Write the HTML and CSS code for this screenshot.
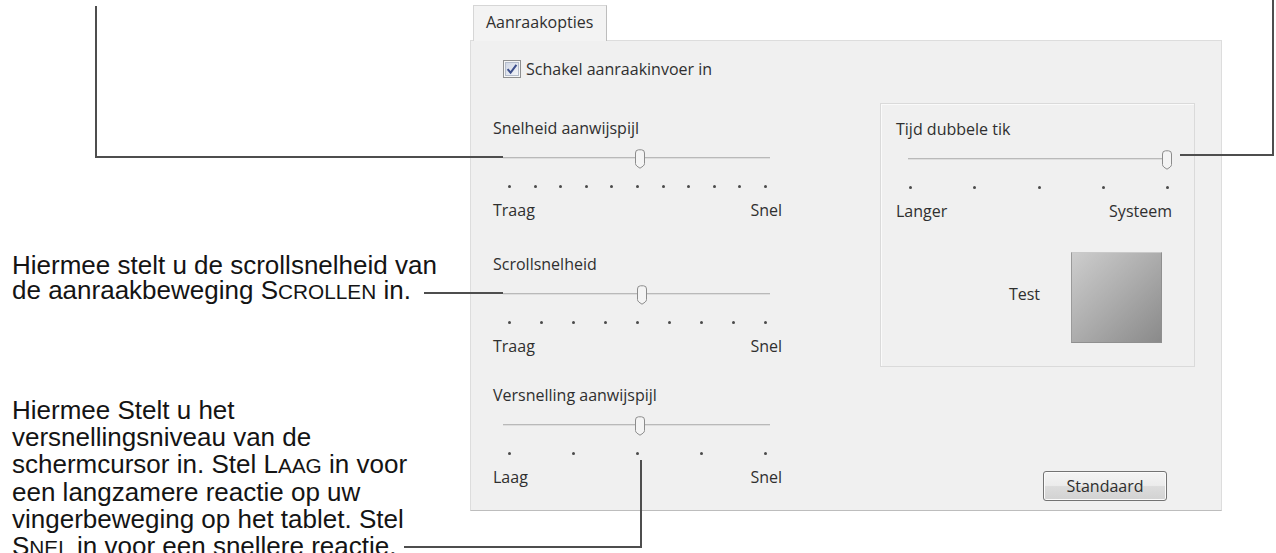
FILE: index.html
```html
<!DOCTYPE html>
<html lang="nl">
<head>
<meta charset="utf-8">
<title>Aanraakopties</title>
<link rel="stylesheet" href="styles.css">
</head>
<body>
<div class="page">
  <div class="notes">
    <p class="note note-scroll">Hiermee stelt u de scrollsnelheid van<br>de aanraakbeweging S<span class="sc">crollen</span> in.</p>
    <p class="note note-accel">Hiermee Stelt u het<br>versnellingsniveau van de<br>schermcursor in. Stel L<span class="sc">aag</span> in voor<br>een langzamere reactie op uw<br>vingerbeweging op het tablet. Stel<br>S<span class="sc">nel</span> in voor een snellere reactie.</p>
  </div>

  <div class="dialog">
    <div class="tabs"><div class="tab">Aanraakopties</div></div>
    <div class="panel">
      <div class="check-row">
        <span class="checkbox">
          <svg width="18" height="18" viewBox="0 0 18 18">
            <defs>
              <linearGradient id="cbg" x1="0" y1="0" x2="1" y2="1">
                <stop offset="0" stop-color="#cfd6e4"/>
                <stop offset="1" stop-color="#f4f6fa"/>
              </linearGradient>
            </defs>
            <rect x="0.5" y="0.5" width="17" height="17" fill="#f6f6f6" stroke="#8e8f90"/>
            <rect x="2.5" y="2.5" width="13" height="13" fill="url(#cbg)" stroke="#b4bccb"/>
            <path d="M4.6 9.2 L7.6 12.6 L13.4 4.8" fill="none" stroke="#3d4f8c" stroke-width="2"/>
          </svg>
        </span>
        <span class="check-text">Schakel aanraakinvoer in</span>
      </div>

      <div class="cols">
        <div class="col-left">
          <div class="slider s-left">
            <div class="s-label">Snelheid aanwijspijl</div>
            <div class="s-track"><div class="s-rail"><span class="thumb" style="left:51%"><svg width="12" height="20" viewBox="0 0 12 20"><path d="M1.5 4 Q1.5 0.8 4.5 0.8 H7.5 Q10.5 0.8 10.5 4 V14.5 Q10.5 16 9 17.2 L6 19.2 L3 17.2 Q1.5 16 1.5 14.5 Z" fill="#f4f4f4" stroke="#8c8c8c"/></svg></span></div></div>
            <div class="s-ticks"><i></i><i></i><i></i><i></i><i></i><i></i><i></i><i></i><i></i><i></i><i></i></div>
            <div class="s-ends"><span>Traag</span><span>Snel</span></div>
          </div>

          <div class="slider s-left b2">
            <div class="s-label">Scrollsnelheid</div>
            <div class="s-track"><div class="s-rail"><span class="thumb" style="left:52%"><svg width="12" height="20" viewBox="0 0 12 20"><path d="M1.5 4 Q1.5 0.8 4.5 0.8 H7.5 Q10.5 0.8 10.5 4 V14.5 Q10.5 16 9 17.2 L6 19.2 L3 17.2 Q1.5 16 1.5 14.5 Z" fill="#f4f4f4" stroke="#8c8c8c"/></svg></span></div></div>
            <div class="s-ticks"><i></i><i></i><i></i><i></i><i></i><i></i><i></i><i></i><i></i></div>
            <div class="s-ends"><span>Traag</span><span>Snel</span></div>
          </div>

          <div class="slider s-left b3">
            <div class="s-label">Versnelling aanwijspijl</div>
            <div class="s-track"><div class="s-rail"><span class="thumb" style="left:51%"><svg width="12" height="20" viewBox="0 0 12 20"><path d="M1.5 4 Q1.5 0.8 4.5 0.8 H7.5 Q10.5 0.8 10.5 4 V14.5 Q10.5 16 9 17.2 L6 19.2 L3 17.2 Q1.5 16 1.5 14.5 Z" fill="#f4f4f4" stroke="#8c8c8c"/></svg></span></div></div>
            <div class="s-ticks"><i></i><i></i><i></i><i></i><i></i></div>
            <div class="s-ends"><span>Laag</span><span>Snel</span></div>
          </div>
        </div>

        <div class="col-right">
          <div class="group">
            <div class="slider s-right">
              <div class="s-label">Tijd dubbele tik</div>
              <div class="s-track"><div class="s-rail"><span class="thumb" style="left:100%"><svg width="12" height="20" viewBox="0 0 12 20"><path d="M1.5 4 Q1.5 0.8 4.5 0.8 H7.5 Q10.5 0.8 10.5 4 V14.5 Q10.5 16 9 17.2 L6 19.2 L3 17.2 Q1.5 16 1.5 14.5 Z" fill="#f4f4f4" stroke="#8c8c8c"/></svg></span></div></div>
              <div class="s-ticks"><i></i><i></i><i></i><i></i><i></i></div>
              <div class="s-ends"><span>Langer</span><span>Systeem</span></div>
            </div>
            <div class="test-row">
              <span class="test-label">Test</span>
              <div class="test-box"></div>
            </div>
          </div>
          <button class="btn" type="button">Standaard</button>
        </div>
      </div>
    </div>
  </div>

  <div class="callout c1-v"></div>
  <div class="callout c1-h"></div>
  <div class="callout c2-h"></div>
  <div class="callout c2-v"></div>
  <div class="callout c3-h"></div>
  <div class="callout c4-h"></div>
  <div class="callout c4-v"></div>
</div>
</body>
</html>
```

FILE: styles.css
```css
html, body {
  margin: 0;
  padding: 0;
  background: #ffffff;
}

.page {
  position: relative;
  width: 1276px;
  height: 553px;
  overflow: hidden;
  display: flex;
  background: #ffffff;
}

/* ---------- annotations ---------- */
.notes {
  flex: none;
  width: 470px;
  padding-left: 12px;
  box-sizing: border-box;
  font-family: "Liberation Sans", Arial, sans-serif;
  font-size: 26px;
  color: #141414;
}

.note {
  margin: 0;
  white-space: nowrap;
}

.note-scroll {
  margin-top: 253px;
  line-height: 25px;
}

.note-accel {
  margin-top: 93px;
  line-height: 27px;
}

.sc {
  text-transform: uppercase;
  font-size: 0.8em;
}

/* ---------- dialog ---------- */
.dialog {
  flex: none;
  width: 752px;
  padding-top: 5px;
  display: flex;
  flex-direction: column;
  font-family: "Open Sans", "Noto Sans", sans-serif;
  font-size: 16px;
  color: #2f2f2f;
}

.tabs {
  height: 35px;
  display: flex;
  position: relative;
  z-index: 2;
}

.tab {
  margin-left: 3px;
  width: 134px;
  height: 36px;
  box-sizing: border-box;
  border: 1px solid #d6d6d6;
  border-right-color: #bdbdbd;
  border-bottom: none;
  background: #f3f3f3;
  padding-left: 12px;
  line-height: 33px;
}

.panel {
  height: 471px;
  box-sizing: border-box;
  background: #f0f0f0;
  border: 1px solid #dddddd;
  border-bottom-color: #bdbdbd;
  display: flex;
  flex-direction: column;
}

.check-row {
  margin: 19px 0 0 32px;
  height: 18px;
  display: flex;
  align-items: center;
  gap: 5px;
}

.checkbox {
  width: 18px;
  height: 18px;
  display: block;
}

.checkbox svg {
  display: block;
}

.check-text {
  line-height: 18px;
}

.cols {
  margin-top: 25px;
  display: flex;
}

.col-left {
  margin-left: 22px;
  width: 289px;
  padding-top: 14px;
}

.col-right {
  margin-left: 98px;
  display: flex;
  flex-direction: column;
}

/* ---------- sliders ---------- */
.slider {
  position: relative;
}

.s-left {
  width: 289px;
}

.b2 {
  margin-top: 32px;
}

.b3 {
  margin-top: 27px;
}

.s-label {
  height: 22px;
  line-height: 22px;
  white-space: nowrap;
}

.s-track {
  position: relative;
  height: 20px;
  margin: 9px 12px 0 10px;
}

.s-track::before {
  content: "";
  position: absolute;
  left: 0;
  right: 0;
  top: 9px;
  height: 1px;
  background: #b9b9b9;
  border-bottom: 1px solid #dedede;
}

.s-rail {
  position: absolute;
  top: 0;
  bottom: 0;
  left: 6px;
  right: 5px;
}

.thumb {
  position: absolute;
  top: 1px;
  width: 12px;
  height: 20px;
  transform: translateX(-50%);
}

.thumb svg {
  display: block;
}

.s-ticks {
  display: flex;
  justify-content: space-between;
  height: 3px;
  margin: 17px 15px 0 15px;
}

.s-ticks i {
  display: block;
  width: 3px;
  height: 3px;
  border-radius: 50%;
  background: #4a4a4a;
}

.s-ends {
  display: flex;
  justify-content: space-between;
  height: 22px;
  line-height: 22px;
  margin-top: 11px;
}

.s-right {
  width: 280px;
}

.s-right .s-track {
  margin: 9px 6px 0 12px;
}

.s-right .s-rail {
  left: 2px;
  right: 3px;
}

.s-right .s-ticks {
  margin: 17px 7px 0 13px;
}

.s-right .s-ends {
  margin-right: 4px;
}

/* ---------- group box ---------- */
.group {
  width: 315px;
  height: 264px;
  box-sizing: border-box;
  border: 1px solid #dadada;
  box-shadow: inset 1px 1px 0 #fafafa;
  padding: 14px 0 0 15px;
}

.test-row {
  display: flex;
  justify-content: flex-end;
  align-items: center;
  gap: 31px;
  margin-top: 30px;
  padding-right: 32px;
}

.test-label {
  margin-bottom: 8px;
}

.test-box {
  width: 91px;
  height: 91px;
  box-sizing: border-box;
  border: 1px solid #8f8f8f;
  border-top-color: #c9c9c9;
  border-left-color: #9a9a9a;
  background: linear-gradient(135deg, #cdcdcd 0%, #acacac 50%, #8a8a8a 100%);
}

/* ---------- button ---------- */
.btn {
  margin: 104px 0 0 163px;
  width: 124px;
  height: 30px;
  border: 1px solid #737373;
  border-radius: 3px;
  background: linear-gradient(#f4f4f4 0%, #ececec 48%, #dcdcdc 52%, #d2d2d2 100%);
  box-shadow: inset 0 0 0 1px #fbfbfb;
  font-family: "Open Sans", "Noto Sans", sans-serif;
  font-size: 16px;
  color: #2e2e2e;
  padding: 0;
  line-height: 26px;
}

/* ---------- callout lines ---------- */
.callout {
  position: absolute;
  background: #4e4e4e;
}

.c1-v {
  left: 95px;
  top: 6px;
  width: 2px;
  height: 152px;
}

.c1-h {
  left: 95px;
  top: 156px;
  width: 408px;
  height: 2px;
}

.c2-h {
  left: 1180px;
  top: 154px;
  width: 94px;
  height: 2px;
}

.c2-v {
  left: 1272px;
  top: 0;
  width: 2px;
  height: 156px;
}

.c3-h {
  left: 424px;
  top: 292px;
  width: 79px;
  height: 2px;
}

.c4-h {
  left: 404px;
  top: 546px;
  width: 238px;
  height: 2px;
}

.c4-v {
  left: 640px;
  top: 460px;
  width: 2px;
  height: 88px;
}
```
